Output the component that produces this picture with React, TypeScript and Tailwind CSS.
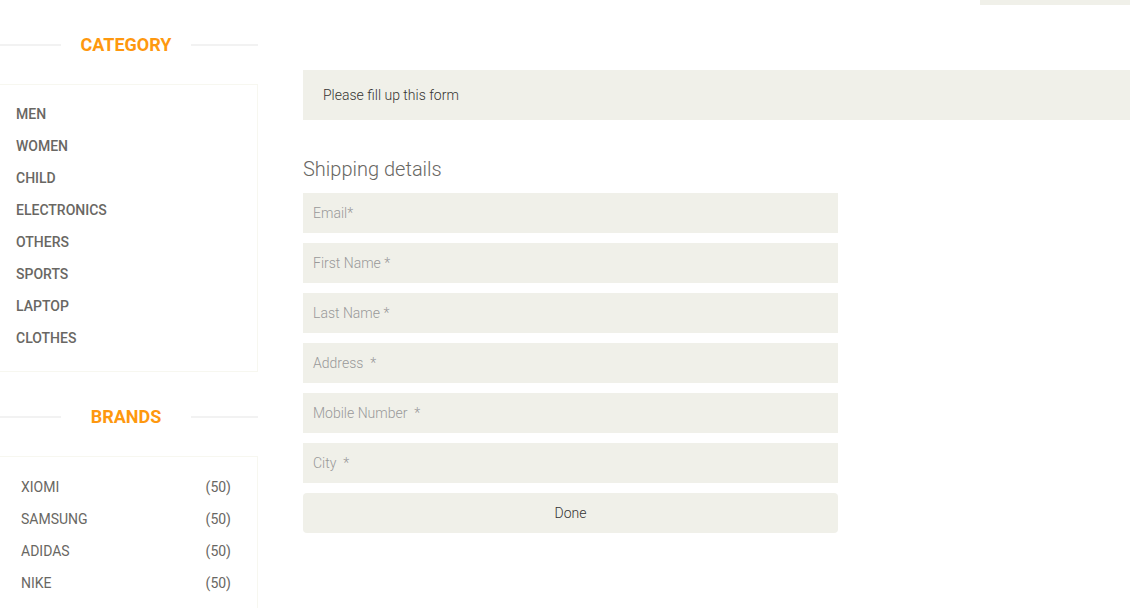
import React from "react";

const categories = ["MEN", "WOMEN", "CHILD", "ELECTRONICS", "OTHERS", "SPORTS", "LAPTOP", "CLOTHES"];
const brands = ["XIOMI", "SAMSUNG", "ADIDAS", "NIKE"];
const fields = ["Email*", "First Name *", "Last Name *", "Address  *", "Mobile Number  *", "City  *"];

function Title({ text }: { text: string }) {
  return (
    <div className="flex items-center h-[20px]">
      <div className="w-[61px] h-[2px] bg-[#f2f2f2]" />
      <div className="w-[130px] text-center text-[18px] font-bold text-[#FE980F] leading-[20px]">{text}</div>
      <div className="flex-1 h-[2px] bg-[#f2f2f2]" />
    </div>
  );
}

export default function App() {
  return (
    <div className="w-[1130px] h-[608px] overflow-hidden bg-white flex" style={{ fontFamily: "Roboto, 'Liberation Sans', sans-serif" }}>
      <div className="w-[258px] shrink-0">
        <div className="mt-[35px] mb-[29px]">
          <Title text="CATEGORY" />
        </div>
        <div className="border border-l-0 border-[#F7F7F0] pt-[13px] pb-[17px] pl-[16px]">
          {categories.map((c) => (
            <div key={c} className="h-[32px] leading-[32px] text-[14px] font-medium text-[#696763]">
              {c}
            </div>
          ))}
        </div>
        <div className="mt-[35px] mb-[29px]">
          <Title text="BRANDS" />
        </div>
        <div className="border border-l-0 border-[#F7F7F0] pt-[14px] pb-[20px] pl-[21px] pr-[26px]">
          {brands.map((b) => (
            <div key={b} className="h-[32px] leading-[32px] text-[14px] text-[#696763] flex justify-between">
              <span>{b}</span>
              <span>(50)</span>
            </div>
          ))}
        </div>
      </div>
      <div className="ml-[45px] flex-1">
        <div className="h-[5px] w-[150px] ml-auto bg-[#F0F0E9]" />
        <div className="mt-[65px] h-[50px] bg-[#F0F0E9] flex items-center pl-[20px] text-[14px] font-light text-[#363432]">
          Please fill up this form
        </div>
        <div className="mt-[37px] text-[20px] font-light text-[#696763] leading-[24px]">Shipping details</div>
        <div className="mt-[12px] w-[535px] flex flex-col gap-[10px]">
          {fields.map((f) => (
            <div key={f} className="h-[40px] bg-[#F0F0E9] flex items-center pl-[10px] text-[14px] font-light text-[#999999] whitespace-pre">
              {f}
            </div>
          ))}
          <div className="h-[40px] bg-[#F0F0E9] rounded-[4px] flex items-center justify-center text-[14px] font-light text-[#333333]">
            Done
          </div>
        </div>
      </div>
    </div>
  );
}
